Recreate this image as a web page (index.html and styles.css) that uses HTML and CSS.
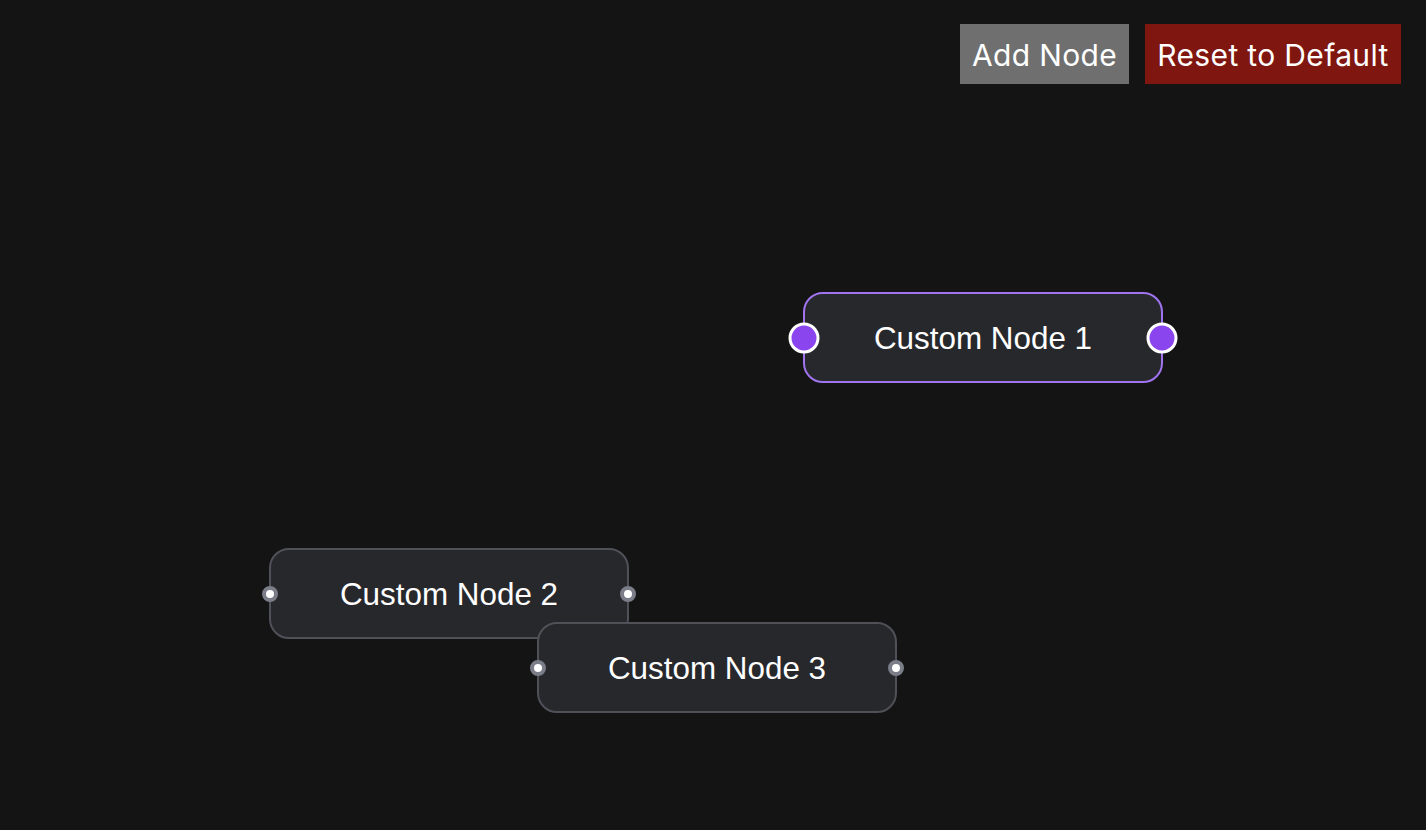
FILE: index.html
```html
<!DOCTYPE html>
<html>
<head>
<meta charset="utf-8">
<link rel="stylesheet" href="styles.css">
</head>
<body>
<div class="app">
  <div class="toolbar">
    <button class="btn btn-add">Add Node</button>
    <button class="btn btn-reset">Reset to Default</button>
  </div>
  <div class="canvas">
    <div class="node selected" style="left:803px; top:292px;">
      <span class="handle handle-left"></span>
      <span class="label">Custom Node 1</span>
      <span class="handle handle-right"></span>
    </div>
    <div class="node" style="left:269px; top:548px;">
      <span class="handle handle-left"></span>
      <span class="label">Custom Node 2</span>
      <span class="handle handle-right"></span>
    </div>
    <div class="node" style="left:537px; top:622px;">
      <span class="handle handle-left"></span>
      <span class="label">Custom Node 3</span>
      <span class="handle handle-right"></span>
    </div>
  </div>
</div>
</body>
</html>
```
FILE: styles.css
```css
html, body {
  margin: 0;
  padding: 0;
  background: #141414;
  width: 100%;
  height: 100%;
  overflow: hidden;
}
.app {
  position: relative;
  width: 1426px;
  height: 830px;
}
.toolbar {
  display: flex;
  justify-content: flex-end;
  gap: 16px;
  padding: 24px 25px 0 0;
}
.btn {
  height: 60px;
  border: none;
  color: #ffffff;
  font-family: Inter, "Liberation Sans", sans-serif;
  font-size: 30px;
  letter-spacing: 0.35px;
  padding: 0;
  line-height: 62px;
  white-space: nowrap;
}
.btn-add {
  background: #6f6f6f;
  width: 169px;
}
.btn-reset {
  background: #7f1610;
  width: 256px;
}
.canvas {
  position: absolute;
  inset: 0;
  pointer-events: none;
}
.node {
  position: absolute;
  box-sizing: border-box;
  width: 360px;
  height: 91px;
  padding-top: 2px;
  background: #27282c;
  border: 2px solid #4f5058;
  border-radius: 20px;
  display: flex;
  align-items: center;
  justify-content: center;
}
.node.selected {
  border-color: #9f74ee;
}
.label {
  color: #ffffff;
  font-family: "Liberation Sans", Arial, sans-serif;
  font-size: 31.4px;
}
.handle {
  position: absolute;
  top: 50%;
  box-sizing: border-box;
  width: 16px;
  height: 16px;
  border-radius: 50%;
  background: #ffffff;
  border: 4px solid #7b7d89;
  transform: translate(-50%, -50%);
}
.handle-left { left: -1px; }
.handle-right { left: calc(100% + 1px); }
.selected .handle {
  width: 31px;
  height: 31px;
  background: #8a45ef;
  border: 3px solid #ffffff;
}
```
